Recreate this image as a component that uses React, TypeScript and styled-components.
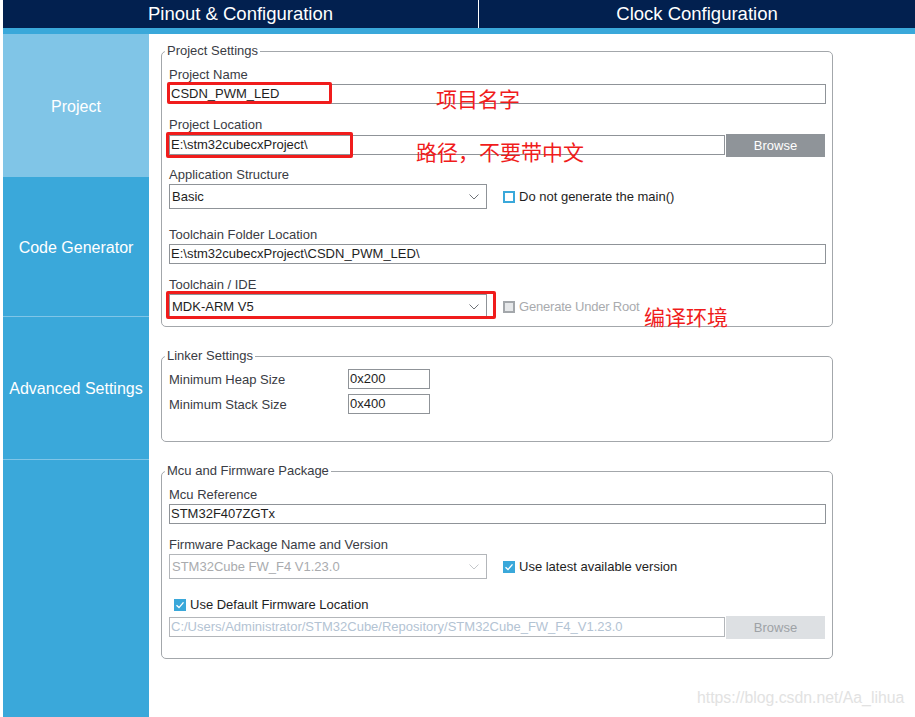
import React from "react";
import styled, { createGlobalStyle } from "styled-components";

const COLORS = {
  navy: "#02204f",
  blue: "#3aa8da",
  lightBlue: "#80c5e7",
  border: "#8f9398",
  frame: "#a3a7ab",
  label: "#3a3c44",
  text: "#1e1e1e",
  red: "#f01c1c",
};

const GlobalStyle = createGlobalStyle`
  html, body {
    margin: 0;
    padding: 0;
    background: #ffffff;
    font-family: "Liberation Sans", Arial, sans-serif;
  }
  #root {
    height: 100vh;
  }
`;

function Chevron({ disabled }: { disabled?: boolean }) {
  return (
    <ChevronSvg viewBox="0 0 10 6" width="10" height="6">
      <polyline
        points="0.5,0.5 5,5 9.5,0.5"
        fill="none"
        stroke={disabled ? "#c4c7ca" : "#6f7378"}
        strokeWidth="1"
      />
    </ChevronSvg>
  );
}

function Select({ value, disabled }: { value: string; disabled?: boolean }) {
  return (
    <SelectBox $disabled={disabled}>
      <span>{value}</span>
      <Chevron disabled={disabled} />
    </SelectBox>
  );
}

function Check({ kind, children }: { kind: "empty" | "checked" | "disabled"; children: React.ReactNode }) {
  return (
    <CheckRow $disabled={kind === "disabled"}>
      <Box $kind={kind}>
        {kind === "checked" && (
          <svg viewBox="0 0 12 12" width="12" height="12">
            <polyline points="2.5,6.3 5,8.6 9.5,3.4" fill="none" stroke="#fff" strokeWidth="1.4" />
          </svg>
        )}
      </Box>
      {children}
    </CheckRow>
  );
}

function App() {
  return (
    <Root>
      <GlobalStyle />
      <TopBar>
        <Tab $divider>Pinout &amp; Configuration</Tab>
        <Tab>Clock Configuration</Tab>
      </TopBar>
      <Strip />
      <Body>
        <Sidebar>
          <SideItem $h={143} $active>Project</SideItem>
          <SideItem $h={140} $line>Code Generator</SideItem>
          <SideItem $h={143} $line>Advanced Settings</SideItem>
          <SideRest />
        </Sidebar>

        <Main>
          <Group $pt={8} $pb={7}>
            <Legend>Project Settings</Legend>
            <Field $h={50}>
              <Label>Project Name</Label>
              <TextBox>CSDN_PWM_LED</TextBox>
            </Field>
            <Field $h={50}>
              <Label>Project Location</Label>
              <BrowseRow>
                <TextBox>E:\stm32cubecxProject\</TextBox>
                <Browse>Browse</Browse>
              </BrowseRow>
            </Field>
            <Field $h={60}>
              <Label>Application Structure</Label>
              <SelectRow>
                <Select value="Basic" />
                <Check kind="empty">Do not generate the main()</Check>
              </SelectRow>
            </Field>
            <Field $h={50}>
              <Label>Toolchain Folder Location</Label>
              <TextBox>E:\stm32cubecxProject\CSDN_PWM_LED\</TextBox>
            </Field>
            <Field>
              <Label>Toolchain / IDE</Label>
              <SelectRow>
                <Select value="MDK-ARM V5" />
                <Check kind="disabled">Generate Under Root</Check>
              </SelectRow>
            </Field>
          </Group>

          <Group $pt={5} $pb={27}>
            <Legend>Linker Settings</Legend>
            <LinkerRow>
              <LinkerLabel>Minimum Heap Size</LinkerLabel>
              <SmallBox>0x200</SmallBox>
            </LinkerRow>
            <LinkerRow>
              <LinkerLabel>Minimum Stack Size</LinkerLabel>
              <SmallBox>0x400</SmallBox>
            </LinkerRow>
          </Group>

          <Group $pt={8} $pb={19}>
            <Legend>Mcu and Firmware Package</Legend>
            <Field $h={50}>
              <Label>Mcu Reference</Label>
              <TextBox>STM32F407ZGTx</TextBox>
            </Field>
            <Field $h={60}>
              <Label>Firmware Package Name and Version</Label>
              <SelectRow>
                <Select value="STM32Cube FW_F4 V1.23.0" disabled />
                <Check kind="checked">Use latest available version</Check>
              </SelectRow>
            </Field>
            <IndentRow>
              <Check kind="checked">Use Default Firmware Location</Check>
            </IndentRow>
            <BrowseRow $top={3}>
              <TextBox $disabled>C:/Users/Administrator/STM32Cube/Repository/STM32Cube_FW_F4_V1.23.0</TextBox>
              <Browse $disabled>Browse</Browse>
            </BrowseRow>
          </Group>
        </Main>
      </Body>

      <RedFrame $x={167} $y={82} $w={165} $h={22} />
      <RedFrame $x={166} $y={132} $w={187} $h={26} />
      <RedFrame $x={166} $y={291} $w={330} $h={28} />
      <Note $x={436} $y={87}>项目名字</Note>
      <Note $x={416} $y={140}>路径，不要带中文</Note>
      <Note $x={644} $y={305}>编译环境</Note>
      <Watermark>https://blog.csdn.net/Aa_lihua</Watermark>
    </Root>
  );
}

export default App;

// styles

const Root = styled.div`
  position: relative;
  height: 100%;
  padding-left: 3px;
  display: flex;
  flex-direction: column;
  box-sizing: border-box;
  overflow: hidden;
`;

const TopBar = styled.div`
  display: flex;
  height: 28px;
  background: ${COLORS.navy};
`;

const Tab = styled.div<{ $divider?: boolean }>`
  flex: ${(p) => (p.$divider ? "0 0 475px" : "1")};
  display: flex;
  align-items: center;
  justify-content: center;
  color: #ffffff;
  font-size: 18.5px;
  border-right: ${(p) => (p.$divider ? "1px solid #ffffff" : "none")};
`;

const Strip = styled.div`
  height: 6px;
  background: ${COLORS.blue};
`;

const Body = styled.div`
  flex: 1;
  display: flex;
  min-height: 0;
`;

const Sidebar = styled.div`
  width: 146px;
  flex-shrink: 0;
  display: flex;
  flex-direction: column;
  background: ${COLORS.blue};
`;

const SideItem = styled.div<{ $h: number; $active?: boolean; $line?: boolean }>`
  height: ${(p) => p.$h}px;
  box-sizing: border-box;
  display: flex;
  align-items: center;
  justify-content: center;
  padding-top: 2px;
  color: #ffffff;
  font-size: 16px;
  background: ${(p) => (p.$active ? COLORS.lightBlue : COLORS.blue)};
  border-bottom: ${(p) => (p.$line ? `1px solid ${COLORS.lightBlue}` : "none")};
`;

const SideRest = styled.div`
  flex: 1;
`;

const Main = styled.div`
  flex: 1;
  padding: 9px 0 0 12px;
  display: flex;
  flex-direction: column;
  gap: 21px;
`;

const Group = styled.fieldset<{ $pt: number; $pb: number }>`
  width: 672px;
  box-sizing: border-box;
  margin: 0;
  padding: ${(p) => `${p.$pt}px 6px ${p.$pb}px 7px`};
  border: 1px solid ${COLORS.frame};
  border-radius: 5px;
  min-width: 0;
`;

const Legend = styled.legend`
  margin-left: -4px;
  padding: 0 2px;
  font-size: 13px;
  line-height: 16px;
  color: ${COLORS.label};
`;

const Field = styled.div<{ $h?: number }>`
  display: block;
  height: ${(p) => (p.$h ? `${p.$h}px` : "auto")};
`;

const Label = styled.div`
  font-size: 13px;
  line-height: 16px;
  color: ${COLORS.label};
  margin-bottom: 1px;
`;

const TextBox = styled.div<{ $disabled?: boolean }>`
  height: 20px;
  box-sizing: border-box;
  border: 1px solid ${(p) => (p.$disabled ? "#b3b6ba" : COLORS.border)};
  padding: 0 2px 0 1px;
  font-size: 13px;
  line-height: 18px;
  white-space: nowrap;
  overflow: hidden;
  color: ${(p) => (p.$disabled ? "#b3c3d3" : COLORS.text)};
`;

const BrowseRow = styled.div<{ $top?: number }>`
  display: flex;
  align-items: flex-start;
  gap: 1px;
  margin-top: ${(p) => p.$top || 0}px;
  padding-right: 1px;
  & > ${TextBox} {
    flex: 1;
    margin-top: 1px;
  }
`;

const Browse = styled.div<{ $disabled?: boolean }>`
  width: 99px;
  height: 23px;
  display: flex;
  align-items: center;
  justify-content: center;
  font-size: 13px;
  background: ${(p) => (p.$disabled ? "#dde0e3" : "#8f9499")};
  color: ${(p) => (p.$disabled ? "#9ea2a6" : "#ffffff")};
`;

const SelectRow = styled.div`
  display: flex;
  align-items: center;
  gap: 16px;
`;

const SelectBox = styled.div<{ $disabled?: boolean }>`
  width: 318px;
  height: 25px;
  box-sizing: border-box;
  border: 1px solid ${(p) => (p.$disabled ? "#b3b6ba" : COLORS.border)};
  padding: 0 7px 0 2px;
  display: flex;
  align-items: center;
  justify-content: space-between;
  font-size: 13px;
  color: ${(p) => (p.$disabled ? "#a9abae" : COLORS.text)};
`;

const ChevronSvg = styled.svg`
  display: block;
`;

const CheckRow = styled.div<{ $disabled?: boolean }>`
  display: flex;
  align-items: center;
  gap: 4px;
  font-size: 13px;
  line-height: 16px;
  color: ${(p) => (p.$disabled ? "#a9abae" : COLORS.text)};
  letter-spacing: ${(p) => (p.$disabled ? "-0.2px" : "0")};
`;

const Box = styled.div<{ $kind: "empty" | "checked" | "disabled" }>`
  width: 12px;
  height: 12px;
  box-sizing: border-box;
  display: flex;
  align-items: center;
  justify-content: center;
  border: 2px solid ${(p) => (p.$kind === "disabled" ? "#a3a7ab" : COLORS.blue)};
  background: ${(p) =>
    p.$kind === "checked" ? COLORS.blue : p.$kind === "disabled" ? "#e6e8ea" : "#ffffff"};
  & svg {
    flex-shrink: 0;
  }
`;

const IndentRow = styled.div`
  padding-left: 5px;
  height: 16px;
  display: flex;
  align-items: center;
`;

const LinkerRow = styled.div`
  display: flex;
  align-items: center;
  height: 20px;
  & + & {
    margin-top: 5px;
  }
`;

const LinkerLabel = styled.div`
  width: 179px;
  font-size: 13px;
  color: ${COLORS.label};
`;

const SmallBox = styled.div`
  width: 82px;
  height: 20px;
  box-sizing: border-box;
  border: 1px solid ${COLORS.border};
  padding-left: 1px;
  font-size: 13px;
  line-height: 18px;
  color: ${COLORS.text};
`;

const RedFrame = styled.div<{ $x: number; $y: number; $w: number; $h: number }>`
  position: absolute;
  left: ${(p) => p.$x}px;
  top: ${(p) => p.$y}px;
  width: ${(p) => p.$w}px;
  height: ${(p) => p.$h}px;
  box-sizing: border-box;
  border: 3px solid ${COLORS.red};
  border-radius: 2px;
  pointer-events: none;
`;

const Note = styled.div<{ $x: number; $y: number }>`
  position: absolute;
  left: ${(p) => p.$x}px;
  top: ${(p) => p.$y}px;
  font-family: "Noto Sans CJK SC", "Liberation Sans", sans-serif;
  font-size: 21px;
  line-height: 22px;
  color: ${COLORS.red};
  white-space: nowrap;
`;

const Watermark = styled.div`
  position: absolute;
  left: 697px;
  top: 689px;
  font-size: 15.8px;
  color: #e2e2e2;
  white-space: nowrap;
`;
